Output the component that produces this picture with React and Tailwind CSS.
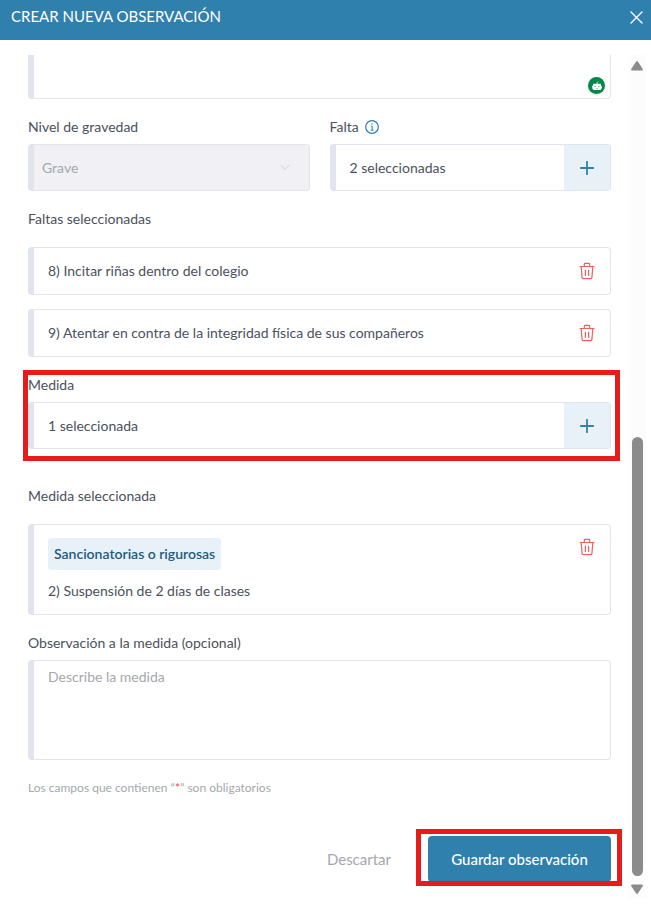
import React, { useState } from 'react'

const faltasIniciales = [
  { id: 8, texto: '8) Incitar riñas dentro del colegio' },
  { id: 9, texto: '9) Atentar en contra de la integridad física de sus compañeros' },
]

const TrashIcon = () => (
  <svg width="16" height="18" viewBox="0 0 16 18" fill="none" stroke="currentColor" strokeWidth="1.2" strokeLinejoin="round" strokeLinecap="round">
    <path d="M1 4.5h14" />
    <path d="M5.3 4.3V2.2c0-.5.3-.8.8-.8h3.8c.5 0 .8.3.8.8v2.1" />
    <path d="M2.2 4.7l.9 11c.1.6.4.9 1 .9h7.8c.6 0 .9-.3 1-.9l.9-11" />
    <path d="M6.4 8v5.500M9.600 8v5.500" />
  </svg>
)

const PlusIcon = () => (
  <svg width="14" height="14" viewBox="0 0 14 14" fill="none" stroke="currentColor" strokeWidth="1.8" strokeLinecap="round">
    <path d="M7 .8v12.4M.8 7h12.4" />
  </svg>
)

const InfoIcon = () => (
  <svg width="14" height="14" viewBox="0 0 14 14" fill="none" stroke="currentColor" strokeWidth="1.2">
    <circle cx="7" cy="7" r="6.3" />
    <path d="M5.9 6.200h1.300v3.900M5.700 10.200h2.800" strokeWidth="1" />
    <circle cx="7" cy="4" r=".7" fill="currentColor" stroke="none" />
  </svg>
)

const RobotIcon = () => (
  <svg width="10" height="10" viewBox="0 0 10 10" fill="none">
    <path d="M5 3.400V1.900L6 .6" stroke="white" strokeWidth=".8" />
    <rect x="1" y="2.800" width="8" height="6.200" rx=".4" fill="white" />
    <path d="M.5 4.800v3M9.500 4.800v3" stroke="white" strokeWidth=".8" />
    <circle cx="3.200" cy="5.500" r=".6" fill="#048848" />
    <circle cx="6.800" cy="5.500" r=".6" fill="#048848" />
    <path d="M4.200 7.700h1.600" stroke="#048848" strokeWidth=".5" />
  </svg>
)

// Campo de solo lectura con botón para agregar
const SelectorField = ({ id, value }) => (
  <div className="flex h-[47px] overflow-hidden rounded-sm border border-l-6 border-[#e1e4ec]">
    <input id={id} readOnly value={value} className="min-w-0 flex-1 px-3.5 outline-none" />
    <button type="button" aria-label="Agregar" className="flex w-[46px] items-center justify-center bg-[#e8f1f7] text-[#2f80ad]">
      <PlusIcon />
    </button>
  </div>
)

const DeleteButton = ({ onClick }) => (
  <button type="button" aria-label="Eliminar" onClick={onClick} className="text-[#ef5f5c]">
    <TrashIcon />
  </button>
)

const Scrollbar = () => (
  <div className="mb-[7px] mt-[15px] flex w-[18px] flex-col items-center bg-[#fcfcfc] text-[#8b8b8b]">
    <svg width="12" height="22" viewBox="0 0 12 22" fill="currentColor">
      <path d="M5 6.700q1-1.200 2 0l4.600 7q.8 1.800-1 1.800H1.400q-1.800 0-1-1.800z" />
    </svg>
    <div className="grow-[36]"></div>
    <div className="w-[11px] grow-[44] rounded-full bg-[#8b8b8b]"></div>
    <svg width="12" height="22" viewBox="0 0 12 22" fill="currentColor">
      <path d="M5 17.300q1 1.200 2 0l4.600-7q.8-1.800-1-1.800H1.400q-1.800 0-1 1.800z" />
    </svg>
  </div>
)

export default function App() {
  const [faltas, setFaltas] = useState(faltasIniciales)
  const [detalle, setDetalle] = useState('')

  const eliminarFalta = (id) => setFaltas(faltas.filter((f) => f.id !== id))

  return (
    <div className="flex min-h-screen flex-col bg-white font-['Lato',sans-serif] text-[14px] leading-5 text-[#4b515c]">
      {/* Header */}
      <header className="flex h-10 shrink-0 justify-between bg-[#2f80ad] pl-[11px] pr-2 text-white">
        <h1 className="pt-1.5 text-[15px]">CREAR NUEVA OBSERVACIÓN</h1>
        <button type="button" aria-label="Cerrar" className="self-start pt-[11px]">
          <svg width="13" height="13" viewBox="0 0 13 13" fill="none" stroke="currentColor" strokeWidth="1.4" strokeLinecap="round">
            <path d="M1 1l11 11M12 1L1 12" />
          </svg>
        </button>
      </header>

      <div className="flex flex-1 pr-[5px]">
        <form className="flex min-w-0 flex-1 flex-col gap-[18px] pb-5 pl-7 pr-[17px] pt-[15px]">
          {/* Descripción */}
          <div className="relative">
            <textarea aria-label="Descripción" className="block h-11 w-full resize-none rounded-b-sm border border-l-6 border-t-0 border-[#e1e4ec] outline-none" />
            <button type="button" aria-label="Asistente" className="absolute bottom-[5px] right-1.5 flex size-[17px] items-center justify-center rounded-full bg-[#048848] shadow-sm">
              <RobotIcon />
            </button>
          </div>

          <div className="grid grid-cols-2 gap-5">
            <div>
              <label htmlFor="gravedad" className="mb-[7px] block">Nivel de gravedad</label>
              <div className="relative">
                <select id="gravedad" disabled className="block h-[47px] w-full appearance-none rounded-sm border border-l-6 border-[#e1e4ec] bg-[#f1f0f5] px-2 text-[#a4a8ae] opacity-100">
                  <option>Grave</option>
                </select>
                <svg className="absolute right-5 top-5" width="10" height="7" viewBox="0 0 10 7" fill="none" stroke="#dcdfe3" strokeWidth="1.4" strokeLinecap="round">
                  <path d="M1 1.200l4 4 4-4" />
                </svg>
              </div>
            </div>
            <div>
              <div className="mb-[7px] flex items-center gap-1.5">
                <label htmlFor="falta">Falta</label>
                <span className="text-[#2f80ad]"><InfoIcon /></span>
              </div>
              <SelectorField id="falta" value="2 seleccionadas" />
            </div>
          </div>

          {/* Faltas */}
          <div>
            <h2 className="mb-[18px]">Faltas seleccionadas</h2>
            <ul className="flex flex-col gap-3.5">
              {faltas.map((falta) => (
                <li key={falta.id} className="flex h-12 items-center justify-between rounded-sm border border-l-6 border-[#e1e4ec] pl-3.5 pr-[15px]">
                  <span>{falta.texto}</span>
                  <DeleteButton onClick={() => eliminarFalta(falta.id)} />
                </li>
              ))}
            </ul>
          </div>

          {/* Medida */}
          <div className="relative">
            <label htmlFor="medida" className="mb-[7px] block">Medida</label>
            <SelectorField id="medida" value="1 seleccionada" />
            <div className="pointer-events-none absolute -bottom-3 -left-[5px] -right-[9px] -top-[5px] border-5 border-[#e81b1b]"></div>
          </div>

          <div className="pt-[19px]">
            <h2 className="mb-[18px]">Medida seleccionada</h2>
            <div className="flex items-start justify-between rounded-sm border border-l-6 border-[#e1e4ec] py-[13px] pl-3.5 pr-[15px]">
              <div>
                <span className="inline-block rounded-sm bg-[#e8f1f7] px-1.5 py-1.5 font-semibold text-[#225b7c]">
                  Sancionatorias o rigurosas
                </span>
                <p className="mt-[11px]">2) Suspensión de 2 días de clases</p>
              </div>
              <DeleteButton />
            </div>
          </div>

          <div>
            <label htmlFor="detalle" className="mb-[7px] block">Observación a la medida (opcional)</label>
            <textarea
              id="detalle"
              value={detalle}
              onChange={(e) => setDetalle(e.target.value)}
              placeholder="Describe la medida"
              className="block h-[100px] w-full resize-none rounded-sm border border-l-6 border-[#e1e4ec] px-3.5 py-1.5 outline-none placeholder:text-[#a4a8ae]"
            />
          </div>

          <p className="text-[12px] leading-5 text-[#a4a8ae]">
            Los campos que contienen “<span className="text-[#ef4444]">*</span>” son obligatorios
          </p>

          {/* Acciones */}
          <div className="flex items-center justify-end gap-[37px] pt-5 text-[15px]">
            <button type="button" className="text-[#a4a8ae]">Descartar</button>
            <div className="relative">
              <button type="button" className="h-[46px] min-w-[183px] rounded-sm bg-[#2f80ad] px-5 font-medium text-white">
                Guardar observación
              </button>
              <div className="pointer-events-none absolute -bottom-1 -left-3 -right-[11px] -top-[7px] border-5 border-[#e81b1b]"></div>
            </div>
          </div>
        </form>
        <Scrollbar />
      </div>
    </div>
  )
}
